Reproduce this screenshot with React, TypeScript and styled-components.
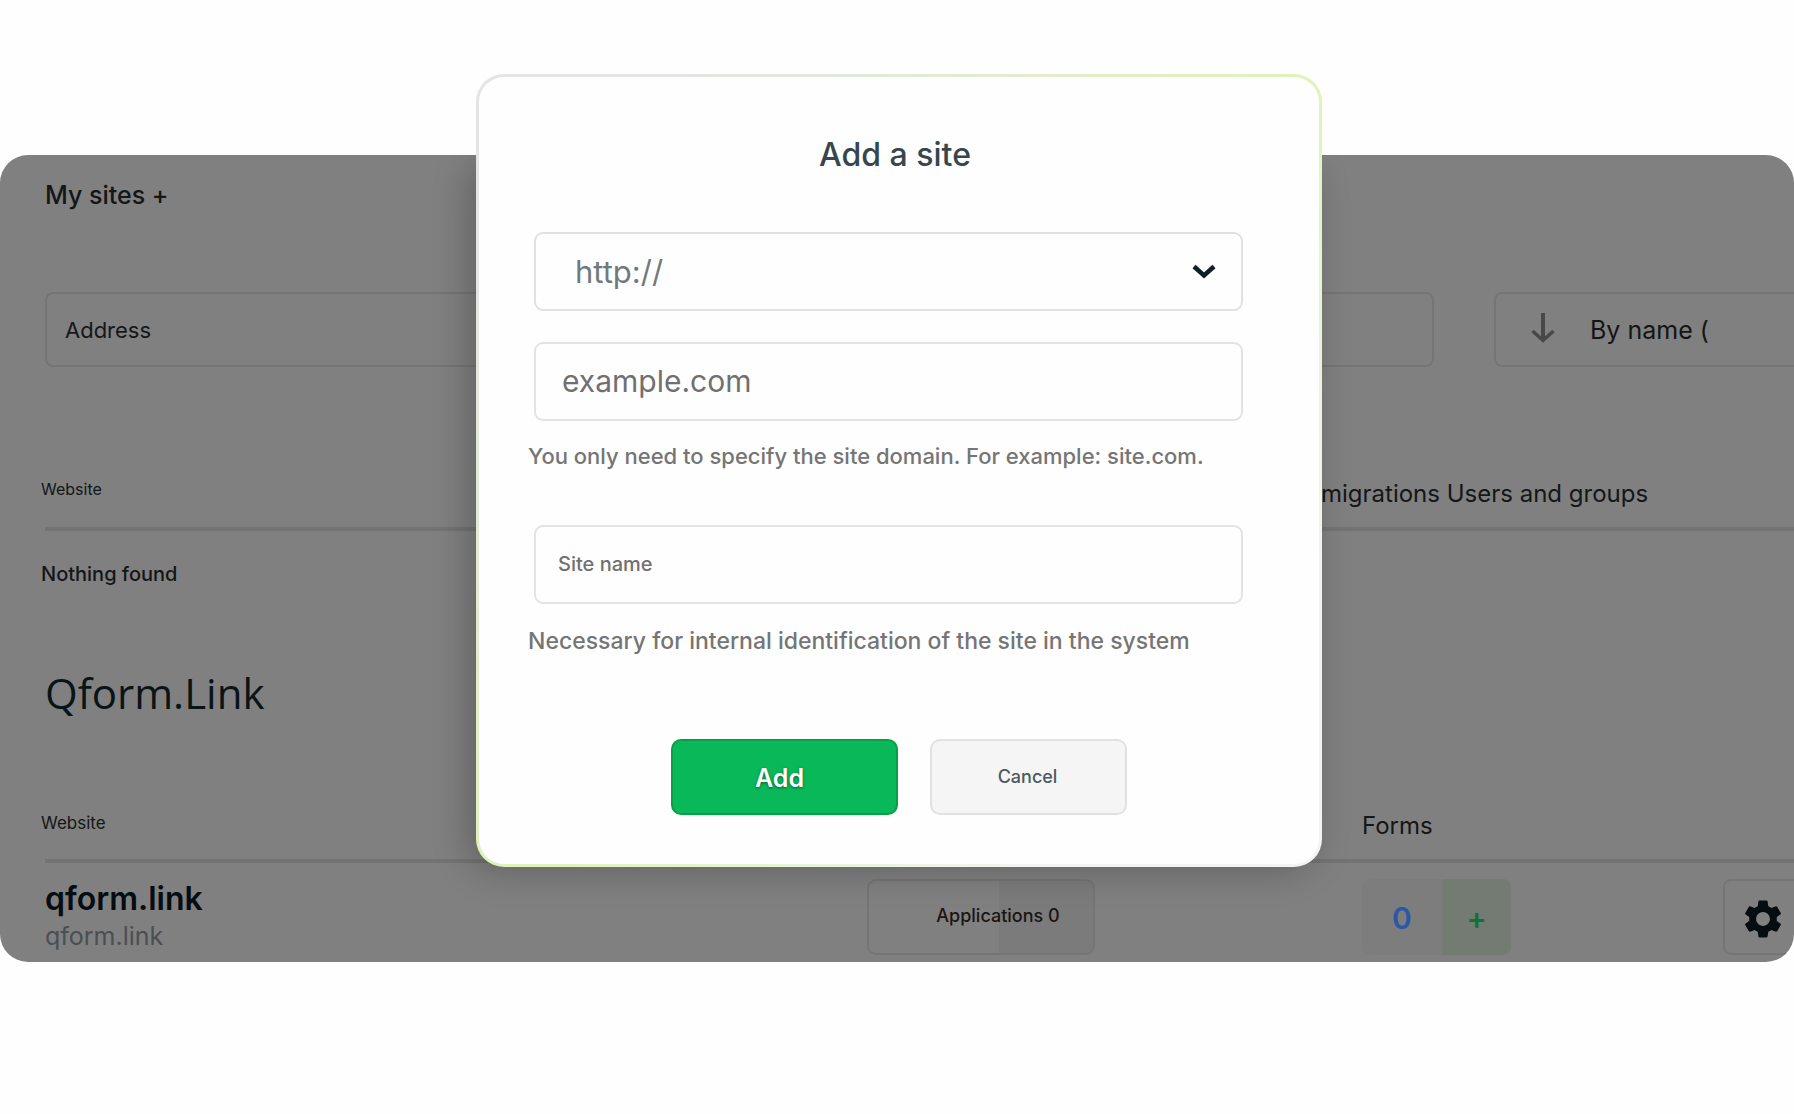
import React from "react";
import styled, { createGlobalStyle } from "styled-components";
import { MdSettings } from "react-icons/md";

const GlobalStyle = createGlobalStyle`
  *, *::before, *::after { box-sizing: border-box; }
  body {
    margin: 0;
    background: #fefefe;
    color: #141617;
    font-family: Inter, "Liberation Sans", sans-serif;
  }
  button, input, select { font-family: inherit; margin: 0; }
`;

const Stage = styled.div`
  position: relative;
  padding-top: 155px;
`;

const Panel = styled.main`
  position: relative;
  overflow: hidden;
  padding: 20px 0 7px 41px;
  border-radius: 28px;
  background: #808080;
`;

const Shade = styled.div`
  position: absolute;
  inset: 0;
  display: flex;
  justify-content: center;
  padding-left: 4px;
  pointer-events: none;

  &::before {
    content: "";
    width: 846px;
    height: 712px;
    border-radius: 28px;
    box-shadow: -8px 4px 36px rgba(0, 0, 0, 0.24);
  }
`;

const PageTitle = styled.h1`
  margin: 0 0 77px;
  padding-left: 4px;
  font-size: 25px;
  line-height: 40px;
  font-weight: 500;
`;

const Filters = styled.div`
  display: flex;
  gap: 60px;
  padding-left: 4px;
  margin-bottom: 110px;
`;

const AddressInput = styled.input`
  flex: 1;
  min-width: 0;
  height: 75px;
  padding: 0 18px;
  border: 2px solid #757575;
  border-radius: 8px;
  background: transparent;
  color: #15171a;
  font-size: 22px;
  &::placeholder { color: #15171a; opacity: 1; }
`;

const SortBox = styled.div`
  position: relative;
  flex: 0 0 300px;

  svg {
    position: absolute;
    left: 36px;
    top: 20px;
    pointer-events: none;
  }
`;

const SortSelect = styled.select`
  appearance: none;
  width: 100%;
  height: 75px;
  padding: 0 0 0 94px;
  border: 2px solid #757575;
  border-right: 0;
  border-radius: 8px 0 0 8px;
  background: transparent;
  color: #141414;
  font-size: 25px;
`;

const Table = styled.table`
  width: 100%;
  table-layout: fixed;
  border-collapse: collapse;
`;

const Col = styled.col<{ $width?: number }>`
  width: ${(p) => (p.$width ? `${p.$width}px` : "auto")};
`;

const HeadCell = styled.th<{ $size: number; $line: number }>`
  height: 54px;
  padding: 0;
  text-align: left;
  vertical-align: top;
  white-space: nowrap;
  font-weight: 400;
  font-size: ${(p) => p.$size}px;
  line-height: ${(p) => p.$line}px;
  background: linear-gradient(#737373, #737373) 0 100% / 100% 4px no-repeat;
  &:first-child { background-position-x: 4px; }
`;

const EmptyCell = styled.td`
  padding: 27px 0 0;
  font-size: 20px;
  line-height: 32px;
  font-weight: 500;
`;

const GroupTitle = styled.h2`
  margin: 75px 0 88px;
  padding-left: 4px;
  color: #0a1316;
  font-family: "Open Sans", "Noto Sans", sans-serif;
  font-size: 42px;
  line-height: 56px;
  font-weight: 500;
`;

const BodyCell = styled.td`
  padding: 16px 0 0;
  vertical-align: top;
  white-space: nowrap;
`;

const SiteName = styled.div`
  padding-left: 4px;
  color: #050d11;
  font-size: 32px;
  line-height: 40px;
  font-weight: 600;
`;

const SiteDomain = styled.div`
  padding-left: 4px;
  color: #494f54;
  font-size: 25px;
  line-height: 34px;
`;

const ApplicationsButton = styled.button`
  display: block;
  width: 228px;
  height: 76px;
  padding: 0 0 4px 34px;
  border: 2px solid #757575;
  border-radius: 9px;
  background: linear-gradient(to right, transparent 58%, rgba(0, 0, 0, 0.04) 58%);
  color: #1b1512;
  font-size: 18px;
  font-weight: 500;
`;

const Counter = styled.div`
  display: flex;
  width: 149px;
  height: 76px;
  overflow: hidden;
  border-radius: 8px;
`;

const CounterButton = styled.button<{ $add?: boolean }>`
  flex: ${(p) => (p.$add ? "0 0 69px" : "1")};
  padding: 2px 0 0;
  border: 0;
  background: ${(p) => (p.$add ? "#737b73" : "#7d7d7d")};
  color: ${(p) => (p.$add ? "#0f7338" : "#2b57a6")};
  font-size: 30px;
  font-weight: 600;
`;

const GearButton = styled.button`
  display: flex;
  align-items: center;
  justify-content: center;
  width: 80px;
  height: 76px;
  padding: 4px 0 0;
  border: 2px solid #757575;
  border-radius: 8px;
  background: transparent;
  color: #050d11;
`;

const Overlay = styled.div`
  position: absolute;
  inset: 74px 0 auto;
  display: flex;
  justify-content: center;
  padding-left: 4px;
`;

const Modal = styled.form`
  width: 846px;
  max-width: 100%;
  padding: 58px 0 49px;
  border: 3px solid transparent;
  border-radius: 28px;
  background:
    linear-gradient(#fefefe, #fefefe) padding-box,
    linear-gradient(135deg, #e4e4e4 12%, #dff3b8 52%, #f3f3f3 82%) border-box;
`;

const ModalTitle = styled.h2`
  margin: 0 0 57px;
  padding-right: 8px;
  text-align: center;
  color: #37464c;
  font-size: 32px;
  line-height: 40px;
  font-weight: 500;
`;

const Fields = styled.div`
  padding: 0 76px 0 49px;
`;

const Field = styled.div<{ $after: number }>`
  position: relative;
  margin: 0 0 ${(p) => p.$after}px 6px;

  svg {
    position: absolute;
    right: 27px;
    top: 32px;
    pointer-events: none;
  }
`;

const ProtocolSelect = styled.select`
  appearance: none;
  display: block;
  width: 100%;
  height: 79px;
  padding: 0 60px 0 39px;
  border: 2px solid #e1e1e1;
  border-radius: 9px;
  background: transparent;
  color: #707a7d;
  font-size: 31px;
`;

const TextInput = styled.input<{ $size: number; $pad: number; $weight: number }>`
  display: block;
  width: 100%;
  height: 79px;
  padding: 0 ${(p) => p.$pad}px 2px;
  border: 2px solid #e3e3e3;
  border-radius: 9px;
  background: transparent;
  color: #707070;
  font-size: ${(p) => p.$size}px;
  font-weight: ${(p) => p.$weight};
  &::placeholder { color: #707070; opacity: 1; }
`;

const Hint = styled.p<{ $size: number; $after: number }>`
  margin: 0 0 ${(p) => p.$after}px;
  color: #757575;
  font-size: ${(p) => p.$size}px;
  line-height: 30px;
  font-weight: 500;
  white-space: nowrap;
`;

const Actions = styled.div`
  display: flex;
  justify-content: center;
  gap: 32px;
`;

const SubmitButton = styled.button`
  width: 227px;
  height: 76px;
  padding: 2px 10px 0 0;
  border: 2px solid #06a048;
  border-radius: 10px;
  background: #09b959;
  color: #fff;
  font-size: 25px;
  font-weight: 600;
  text-shadow: 0 1px 3px rgba(0, 60, 40, 0.7);
`;

const CancelButton = styled.button`
  width: 197px;
  height: 76px;
  padding: 0 2px 2px 0;
  border: 2px solid #e1e1e1;
  border-radius: 10px;
  background: #f5f5f5;
  color: #4b595e;
  font-size: 18px;
  font-weight: 500;
`;

export default function App() {
  return (
    <>
      <GlobalStyle />
      <Stage>
        <Panel>
          <PageTitle>My sites +</PageTitle>
          <Filters>
            <AddressInput aria-label="Address" placeholder="Address" />
            <SortBox>
              <SortSelect aria-label="Sort order">
                <option>By name (</option>
              </SortSelect>
              <svg width="26" height="32" viewBox="0 0 26 32" fill="none" stroke="#484848" aria-hidden="true">
                <path d="M13 1v27" strokeWidth="4" />
                <path d="M2.500 19 13 28.500l10.500-9.500" strokeWidth="3.500" />
              </svg>
            </SortBox>
          </Filters>

          <Table>
            <colgroup>
              <Col />
              <Col $width={473} />
            </colgroup>
            <thead>
              <tr>
                <HeadCell $size={16} $line={24}>Website</HeadCell>
                <HeadCell $size={24} $line={34}>migrations Users and groups</HeadCell>
              </tr>
            </thead>
            <tbody>
              <tr>
                <EmptyCell colSpan={2}>Nothing found</EmptyCell>
              </tr>
            </tbody>
          </Table>

          <GroupTitle>Qform.Link</GroupTitle>

          <Table>
            <colgroup>
              <Col />
              <Col $width={495} />
              <Col $width={361} />
              <Col $width={71} />
            </colgroup>
            <thead>
              <tr>
                <HeadCell $size={17} $line={28}>Website</HeadCell>
                <HeadCell $size={24} $line={34} />
                <HeadCell $size={24} $line={34}>Forms</HeadCell>
                <HeadCell $size={24} $line={34} />
              </tr>
            </thead>
            <tbody>
              <tr>
                <BodyCell>
                  <SiteName>qform.link</SiteName>
                  <SiteDomain>qform.link</SiteDomain>
                </BodyCell>
                <BodyCell>
                  <ApplicationsButton type="button">Applications 0</ApplicationsButton>
                </BodyCell>
                <BodyCell>
                  <Counter>
                    <CounterButton type="button">0</CounterButton>
                    <CounterButton type="button" $add>+</CounterButton>
                  </Counter>
                </BodyCell>
                <BodyCell>
                  <GearButton type="button" aria-label="Settings">
                    <MdSettings size={46} />
                  </GearButton>
                </BodyCell>
              </tr>
            </tbody>
          </Table>
          <Shade />
        </Panel>

        <Overlay>
          <Modal role="dialog" aria-labelledby="add-site-title" onSubmit={(e) => e.preventDefault()}>
            <ModalTitle id="add-site-title">Add a site</ModalTitle>
            <Fields>
              <Field $after={31}>
                <ProtocolSelect aria-label="Protocol">
                  <option>http://</option>
                  <option>https://</option>
                </ProtocolSelect>
                <svg width="24" height="16" viewBox="0 0 24 16" fill="none" stroke="#0d1f27" aria-hidden="true">
                  <path d="M2 2.500 12 11.500 22 2.500" strokeWidth="4.500" />
                </svg>
              </Field>
              <Field $after={20}>
                <TextInput $size={30} $pad={26} $weight={400} aria-label="Site domain" aria-describedby="domain-hint" placeholder="example.com" />
              </Field>
              <Hint id="domain-hint" $size={22} $after={54}>
                You only need to specify the site domain. For example: site.com.
              </Hint>
              <Field $after={22}>
                <TextInput $size={20} $pad={22} $weight={500} aria-label="Site name" aria-describedby="name-hint" placeholder="Site name" />
              </Field>
              <Hint id="name-hint" $size={23} $after={83}>
                Necessary for internal identification of the site in the system
              </Hint>
            </Fields>
            <Actions>
              <SubmitButton type="submit">Add</SubmitButton>
              <CancelButton type="button">Cancel</CancelButton>
            </Actions>
          </Modal>
        </Overlay>
      </Stage>
    </>
  );
}
